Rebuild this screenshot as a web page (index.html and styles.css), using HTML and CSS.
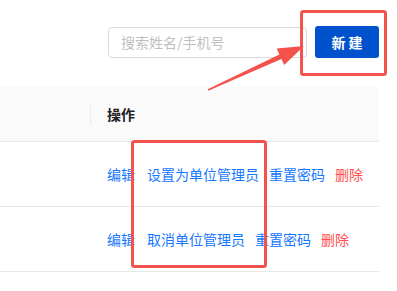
FILE: index.html
```html
<!doctype html>
<html lang="zh-CN">
<head>
	<meta charset="UTF-8">
	<title>单位管理员</title>
	<link rel="stylesheet" href="styles.css">
</head>
<body>
	<div class="page">
		<div class="toolbar">
			<input class="search-input" type="text" placeholder="搜索姓名/手机号">
			<button class="create-btn">新 建</button>
		</div>

		<div class="table">
			<div class="table-head">
				<div class="col-main"></div>
				<div class="col-action"><span class="head-title">操作</span></div>
			</div>
			<div class="table-row">
				<div class="col-main"></div>
				<div class="col-action">
					<a class="link link-first">编辑</a>
					<a class="link">设置为单位管理员</a>
					<a class="link">重置密码</a>
					<a class="link link-danger">删除</a>
				</div>
			</div>
			<div class="table-row">
				<div class="col-main"></div>
				<div class="col-action">
					<a class="link link-first">编辑</a>
					<a class="link">取消单位管理员</a>
					<a class="link">重置密码</a>
					<a class="link link-danger">删除</a>
				</div>
			</div>
		</div>

		<!-- screenshot annotation -->
		<svg class="annotate" width="397" height="291" viewBox="0 0 397 291">
			<rect x="301.5" y="11.5" width="84" height="63" rx="2" fill="none" stroke="#f4524d" stroke-width="3"/>
			<rect x="132.5" y="141.5" width="133" height="125" rx="2" fill="none" stroke="#f4524d" stroke-width="3"/>
			<polygon points="207.7,89.3 279.4,54.5 276.7,48.6 304,46 284.2,65 281.4,59.1 208.3,90.7" fill="#f4524d"/>
		</svg>
	</div>
</body>
</html>
```

FILE: styles.css
```css
*{
	padding: 0;
	margin: 0;
	box-sizing: border-box;
	font-family: "Noto Sans CJK SC", "Noto Sans", sans-serif;
}
body{
	background-color: #fff;
	width: 397px;
	height: 291px;
	overflow: hidden;
}
.page{
	position: relative;
	width: 397px;
	height: 291px;
}
.toolbar{
	display: flex;
	justify-content: flex-end;
	align-items: center;
	gap: 8px;
	padding: 26px 18px 0 0;
	height: 58px;
}
.search-input{
	width: 199px;
	height: 31px;
	border: 1px solid #d9d9d9;
	border-radius: 4px;
	padding: 0 12px;
	font-size: 14px;
	color: #333;
	outline: none;
}
.search-input::placeholder{
	color: #bfbfbf;
}
.create-btn{
	width: 64px;
	height: 32px;
	border: none;
	border-radius: 3px;
	background-color: #0052cc;
	color: #fff;
	font-size: 14px;
	font-weight: bold;
	cursor: pointer;
}
/* table */
.table{
	margin-top: 29px;
	width: 379px;
}
.table-head, .table-row{
	display: flex;
	border-bottom: 1px solid #e8e8e8;
}
.table-head{
	height: 55px;
	background-color: #fafafa;
	align-items: center;
}
.table-row{
	height: 65px;
	align-items: center;
}
.col-main{
	width: 91px;
	height: 100%;
}
.table-head .col-main{
	height: 21px;
	border-right: 1px solid #ebebeb;
}
.col-action{
	flex: 1;
	display: flex;
	align-items: center;
	gap: 10px;
	padding-left: 16px;
}
.head-title{
	font-size: 14px;
	font-weight: bold;
	color: #222;
}
.link{
	font-size: 14px;
	color: #1677ff;
	white-space: nowrap;
	cursor: pointer;
}
.link-first{
	margin-right: 2px;
}
.link-danger{
	color: #ff4d4f;
}
.annotate{
	position: absolute;
	left: 0;
	top: 0;
	pointer-events: none;
}
```
